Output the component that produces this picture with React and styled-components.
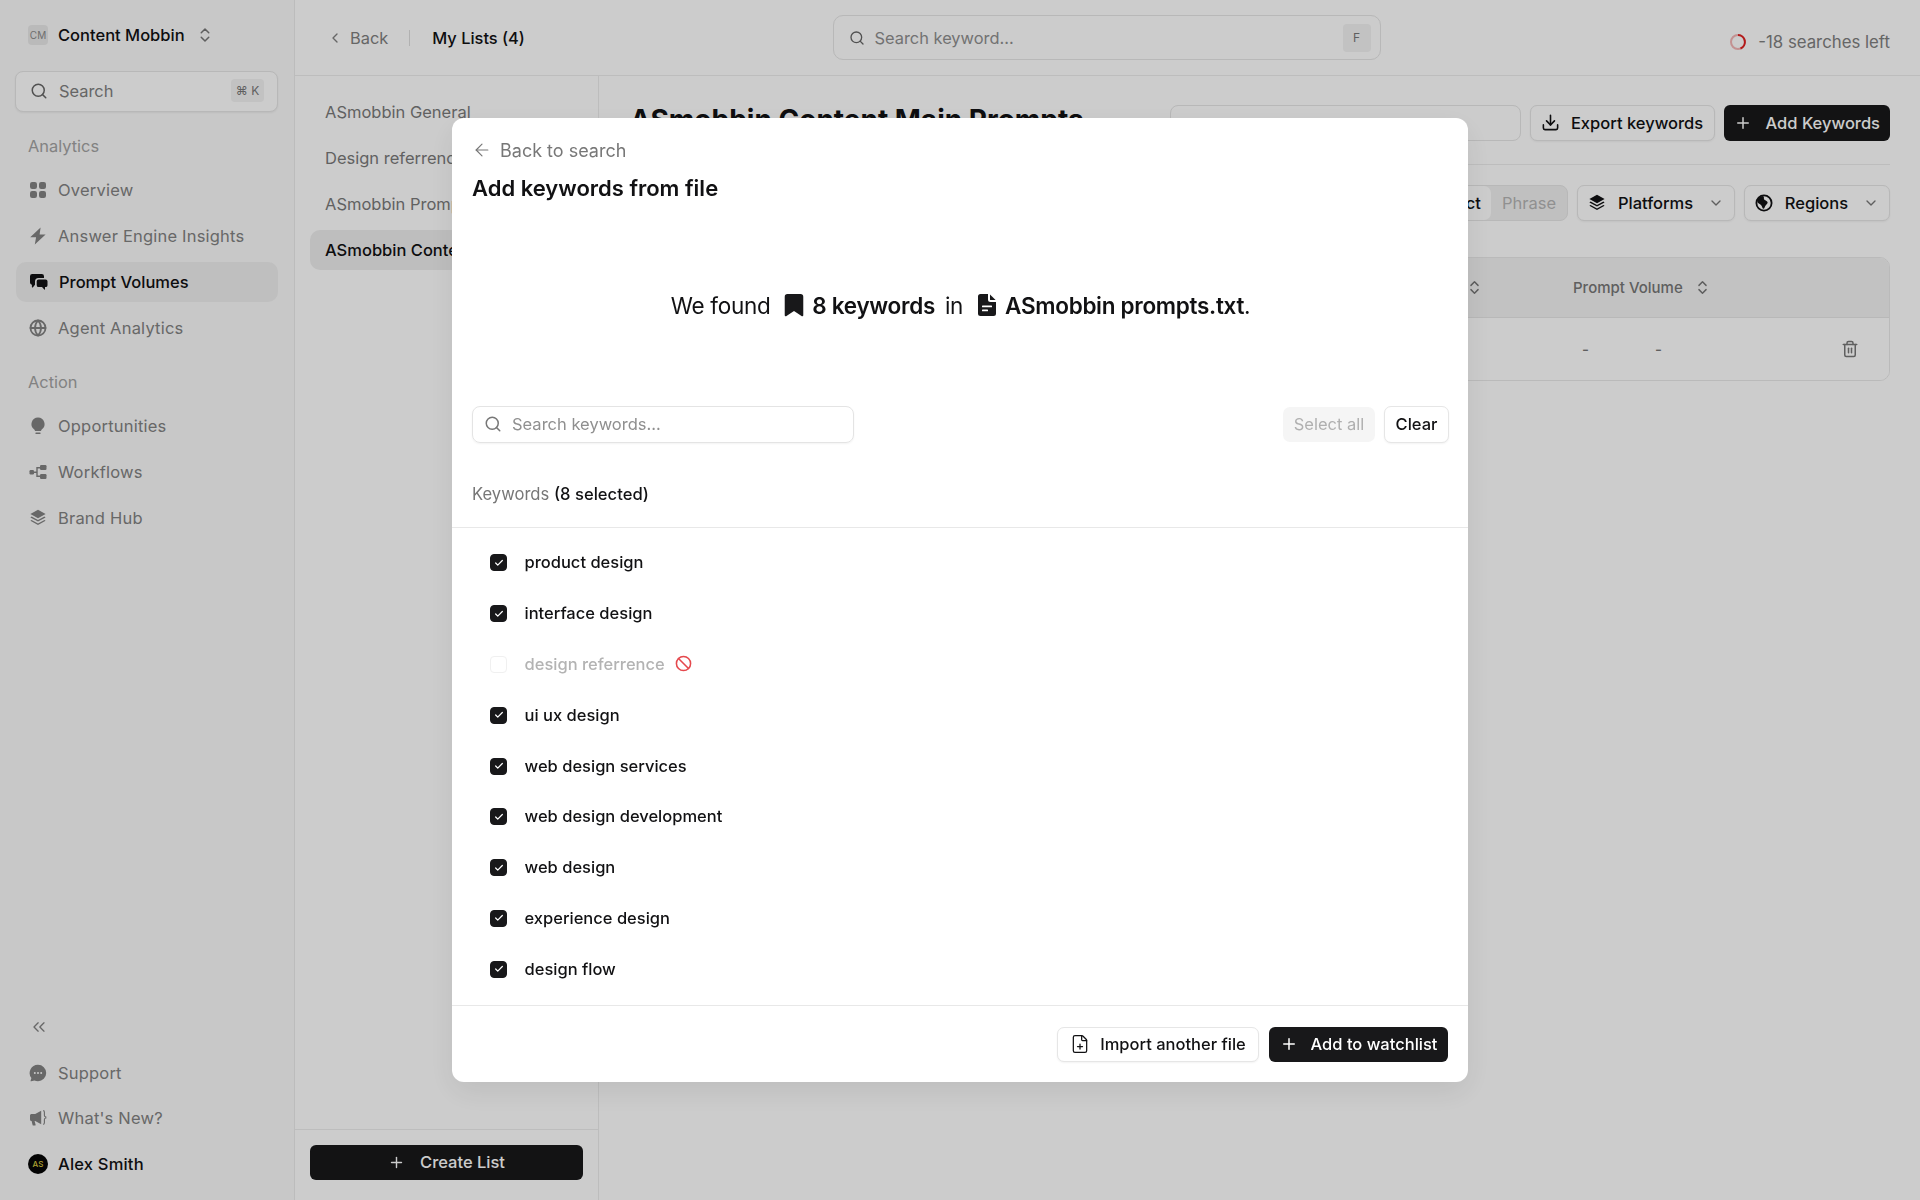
import React from 'react';
import styled, { createGlobalStyle } from 'styled-components';
import {
  ArrowLeft,
  Ban,
  Check,
  ChevronDown,
  ChevronLeft,
  ChevronsLeft,
  ChevronsUpDown,
  Download,
  FilePlus,
  Globe,
  Plus,
  Search,
  Trash2
} from 'lucide-react';

const GlobalStyle = createGlobalStyle`
  html, body {
    margin: 0;
    padding: 0;
    height: 100%;
    background: #fff;
  }

  body {
    font-family: Inter, "Liberation Sans", sans-serif;
    color: #111113;
  }

  * {
    box-sizing: border-box;
  }
`;

const Page = styled.div`
  display: flex;
  width: 100%;
  height: 100vh;
  overflow: hidden;
`;

const Sidebar = styled.aside`
  display: flex;
  flex-direction: column;
  flex: 0 0 295px;
  padding: 25px 16px 16px 15px;
  background: #fafafa;
  border-right: 1px solid #ececec;
`;

const Workspace = styled.div`
  display: flex;
  align-items: center;
  height: 20px;
  padding-left: 13px;
  font-size: 16.5px;
  font-weight: 450;
  color: #111113;

  svg {
    margin-left: 11px;
    color: #777;
  }
`;

const Avatar = styled.span`
  display: flex;
  align-items: center;
  justify-content: center;
  width: 20px;
  height: 20px;
  margin-right: 10px;
  border-radius: 4px;
  background: #e9e9e9;
  color: #8a8a8a;
  font-size: 10px;
  font-weight: 400;
`;

const SideSearch = styled.div`
  display: flex;
  align-items: center;
  gap: 11px;
  height: 41px;
  margin-top: 26px;
  padding: 0 13px 2px 14px;
  border: 1px solid #e6e6e6;
  border-radius: 8px;
  background: #fff;
  box-shadow: 0 1px 2px rgba(0, 0, 0, 0.06);
  color: #808080;
  font-size: 16.4px;

  svg {
    color: #666;
  }
`;

const Kbd = styled.span`
  display: flex;
  align-items: center;
  justify-content: center;
  height: ${props => props.tall ? '28px' : '23px'};
  min-width: ${props => props.tall ? '28px' : '33px'};
  margin-left: auto;
  border-radius: 4px;
  background: #f3f3f3;
  color: #777;
  font-size: 12px;
  font-weight: 400;
`;

const SectionLabel = styled.div`
  height: 24px;
  margin: 22px 0 12px 13px;
  color: #a3a3a3;
  font-size: 16.4px;
  line-height: 24px;
`;

const Nav = styled.nav`
  display: flex;
  flex-direction: column;
  gap: 6px;
`;

const NavItem = styled.div`
  display: flex;
  align-items: center;
  gap: 11px;
  height: 40px;
  margin-left: 1px;
  padding-left: 13px;
  border-radius: 10px;
  background: ${props => props.active ? '#efefef' : 'transparent'};
  color: ${props => props.active || props.dark ? '#111113' : '#828282'};
  font-size: 16.5px;
  font-weight: ${props => props.active || props.dark ? 450 : 400};
  letter-spacing: ${props => props.active ? '0' : '0.2px'};

  svg {
    flex: none;
  }
`;

const BottomNav = styled(Nav)`
  gap: 5.6px;
  margin-top: auto;
`;

const UserDot = styled.span`
  display: flex;
  align-items: center;
  justify-content: center;
  width: 20px;
  height: 20px;
  margin-right: -1px;
  margin-left: -1px;
  border-radius: 50%;
  background: #060606;
  color: #d8c93e;
  font-size: 8px;
`;

const Main = styled.div`
  display: flex;
  flex-direction: column;
  flex: 1;
  min-width: 0;
`;

const TopBar = styled.header`
  display: grid;
  grid-template-columns: 1fr 548px 1fr;
  align-items: center;
  flex: none;
  height: 76px;
  padding-right: 2px;
  border-bottom: 1px solid #ededed;
`;

const Crumbs = styled.div`
  display: flex;
  align-items: center;
  padding-left: 32px;
  font-size: 16.4px;
`;

const BackLink = styled.span`
  display: flex;
  align-items: center;
  gap: 7px;
  color: #808080;
`;

const CrumbSep = styled.span`
  width: 1px;
  height: 16px;
  margin: 0 22px 0 21px;
  background: #dedede;
`;

const CrumbTitle = styled.span`
  color: #111113;
  font-weight: 450;
`;

const TopSearch = styled.div`
  display: flex;
  align-items: center;
  gap: 10px;
  height: 45px;
  padding: 0 9px 0 15px;
  border: 1px solid #e6e6e6;
  border-radius: 10px;
  color: #8f8f8f;
  font-size: 16.4px;

  svg {
    color: #666;
  }
`;

const Quota = styled.div`
  display: flex;
  align-items: center;
  justify-content: flex-end;
  gap: 11px;
  padding: 8px 28px 0 0;
  color: #808080;
  font-size: 16.8px;
`;

const Body = styled.div`
  display: flex;
  flex: 1;
  min-height: 0;
`;

const ListPanel = styled.div`
  display: flex;
  flex-direction: column;
  flex: 0 0 304px;
  border-right: 1px solid #ededed;
`;

const Lists = styled.div`
  display: flex;
  flex-direction: column;
  flex: 1;
  gap: 6px;
  padding: 16px 15px;
`;

const ListItem = styled.div`
  display: flex;
  align-items: center;
  height: 40px;
  padding-left: 15px;
  border-radius: 10px;
  background: ${props => props.active ? '#eeeeee' : 'transparent'};
  color: ${props => props.active ? '#111113' : '#7a7a7a'};
  font-size: 16.5px;
  font-weight: ${props => props.active ? 450 : 400};
  white-space: nowrap;
`;

const ListFooter = styled.div`
  flex: none;
  padding: 15px 15px 20px;
  border-top: 1px solid #ededed;
`;

const DarkButton = styled.div`
  display: flex;
  align-items: center;
  justify-content: center;
  gap: ${props => props.wide ? '15px' : '10px'};
  height: 35px;
  padding: 0 10px 1px;
  border-radius: 6px;
  background: #18181a;
  color: #fff;
  font-size: 16.5px;
  font-weight: 450;
  white-space: nowrap;
`;

const Content = styled.section`
  flex: 1;
  min-width: 0;
  padding: 29px 30px 0 31px;
`;

const HeadRow = styled.div`
  display: flex;
  align-items: center;
  gap: 9px;
  height: 36px;
`;

const Title = styled.h1`
  flex: 1;
  margin: -7px 0 0;
  font-size: 28px;
  font-weight: 700;
  line-height: 30px;
  white-space: nowrap;
`;

const HeadSearch = styled.div`
  display: flex;
  align-items: center;
  flex: 0 0 351px;
  height: 36px;
  border: 1px solid #e6e6e6;
  border-radius: 8px;
`;

const OutlineButton = styled.div`
  display: flex;
  align-items: center;
  justify-content: center;
  gap: ${props => props.gap || 10}px;
  height: ${props => props.h || 36}px;
  width: ${props => props.w}px;
  padding-bottom: 1px;
  border: 1px solid #e6e6e6;
  border-radius: 7px;
  background: #fff;
  box-shadow: 0 1px 2px rgba(0, 0, 0, 0.05);
  color: #111113;
  font-size: 16.5px;
  font-weight: 450;
  white-space: nowrap;
`;

const AddKeywords = styled(DarkButton)`
  flex: 0 0 166px;
  height: 36px;
  gap: 14px;
`;

const HeadDivider = styled.div`
  height: 1px;
  margin: 23px 0 20px;
  background: #ededed;
`;

const FilterRow = styled.div`
  display: flex;
  justify-content: flex-end;
  gap: 9px;
  height: 36px;
`;

const Segments = styled.div`
  display: flex;
  border: 1px solid #e6e6e6;
  border-radius: 8px;
  background: #f1f1f1;
  font-size: 16.5px;
`;

const Segment = styled.div`
  display: flex;
  align-items: center;
  justify-content: center;
  width: ${props => props.w}px;
  border-radius: 7px;
  background: ${props => props.active ? '#fff' : 'transparent'};
  color: ${props => props.active ? '#111113' : '#b5b5b5'};
  font-weight: ${props => props.active ? 450 : 400};
`;

const ChevronMuted = styled(ChevronDown)`
  margin-left: 3px;
  color: #777;
`;

const Table = styled.div`
  margin-top: 36px;
  border: 1px solid #e9e9e9;
  border-radius: 10px;
  overflow: hidden;
`;

const TableRow = styled.div`
  display: grid;
  grid-template-columns: 1fr 226px 316px;
  align-items: center;
  height: ${props => props.head ? '60px' : '62px'};
  background: ${props => props.head ? '#f3f3f3' : '#fff'};
  border-bottom: ${props => props.head ? '1px solid #e6e6e6' : '0'};
  color: #777;
  font-size: 15px;
  font-weight: 450;
`;

const HeadCell = styled.div`
  display: flex;
  align-items: center;
  gap: 11px;
  padding-left: ${props => props.pad || 0}px;
`;

const DataCell = styled.div`
  display: flex;
  align-items: center;
  padding: 0 30px 0 9px;

  span + span {
    margin-left: 66px;
  }

  svg {
    margin-left: auto;
    color: #777;
  }
`;

const Overlay = styled.div`
  position: fixed;
  inset: 0;
  display: flex;
  align-items: center;
  justify-content: center;
  background: rgba(0, 0, 0, 0.2);
`;

const Modal = styled.div`
  display: flex;
  flex-direction: column;
  width: 1016px;
  height: 964px;
  border-radius: 12px;
  background: #fff;
  box-shadow: 0 10px 30px rgba(0, 0, 0, 0.08);
  overflow: hidden;
`;

const ModalHead = styled.div`
  flex: none;
  padding: 22px 19px 0 20px;
`;

const BackRow = styled.div`
  display: flex;
  align-items: center;
  gap: 8px;
  height: 20px;
  color: #777;
  font-size: 18px;
`;

const ModalTitle = styled.h2`
  margin: 14px 0 0;
  font-size: 22px;
  font-weight: 600;
  line-height: 28px;
`;

const Found = styled.div`
  display: flex;
  align-items: center;
  justify-content: center;
  gap: 10px;
  height: 30px;
  margin-top: 88px;
  font-size: 22.5px;
  letter-spacing: -0.3px;

  strong {
    font-weight: 600;
  }
`;

const FoundPart = styled.span`
  display: flex;
  align-items: center;
  gap: 8px;
  margin-left: 4px;
`;

const SearchRow = styled.div`
  display: flex;
  align-items: center;
  justify-content: space-between;
  margin-top: 86px;
`;

const KeywordSearch = styled.div`
  display: flex;
  align-items: center;
  gap: 10px;
  width: 382px;
  height: 37px;
  padding: 0 0 1px 11px;
  border: 1px solid #e4e4e4;
  border-radius: 8px;
  box-shadow: 0 1px 2px rgba(0, 0, 0, 0.05);
  color: #8f8f8f;
  font-size: 16.5px;

  svg {
    color: #777;
  }
`;

const RowActions = styled.div`
  display: flex;
  align-items: center;
  gap: 9px;
`;

const DisabledButton = styled.div`
  display: flex;
  align-items: center;
  justify-content: center;
  width: 92px;
  height: 35px;
  padding-bottom: 1px;
  border-radius: 7px;
  background: #f5f5f5;
  color: #b0b0b0;
  font-size: 16.5px;
`;

const CountLabel = styled.div`
  height: 20px;
  margin: 41px 0 23px;
  color: #777;
  font-size: 16.6px;
  line-height: 20px;

  b {
    color: #111113;
    font-weight: 500;
  }
`;

const KeywordList = styled.div`
  flex: 1;
  min-height: 0;
  padding-top: 9px;
  border-top: 1px solid #e8e8e8;
  overflow: hidden;
`;

const KeywordRow = styled.div`
  display: flex;
  align-items: center;
  gap: 17.5px;
  height: 50.8px;
  padding-left: 38px;
  color: ${props => props.disabled ? '#b3b3b3' : '#111113'};
  font-size: 16.5px;
  font-weight: 450;

  > svg {
    margin-left: -7px;
    color: #e5484d;
  }
`;

const Checkbox = styled.span`
  display: flex;
  align-items: center;
  justify-content: center;
  flex: none;
  width: 17px;
  height: 17px;
  margin-top: 1px;
  border: 1px solid ${props => props.off ? '#f0f0f0' : '#18181a'};
  border-radius: 4px;
  background: ${props => props.off ? '#fff' : '#18181a'};
  color: #fff;
`;

const ModalFooter = styled.div`
  display: flex;
  justify-content: flex-end;
  gap: 10px;
  flex: none;
  height: 77px;
  padding: 21px 20px 0 0;
  border-top: 1px solid #e8e8e8;
`;

const WatchButton = styled(DarkButton)`
  width: 179px;
  gap: 13px;
`;

const Tile = ({ size = 18 }) => (
  <svg width={size} height={size} viewBox="0 0 18 18" fill="currentColor">
    <rect x="1" y="1" width="7" height="7" rx="2.2" />
    <rect x="10" y="1" width="7" height="7" rx="2.2" />
    <rect x="1" y="10" width="7" height="7" rx="2.2" />
    <rect x="10" y="10" width="7" height="7" rx="2.2" />
  </svg>
);

const Bolt = () => (
  <svg width="18" height="18" viewBox="0 0 18 18" fill="currentColor">
    <path d="M11.6.6 1.2 10.3h5.9L5.8 17.6 16.6 7.4h-6z" />
  </svg>
);

const Chats = () => (
  <svg width="19" height="18" viewBox="0 0 19 18" fill="currentColor">
    <path d="M3.2 1h9.6A2.2 2.2 0 0 1 15 3.2V5H9.5a3.5 3.5 0 0 0-3.5 3.5v3.3l-2.2 2.6a.5.5 0 0 1-.9-.3v-2.4A2.2 2.2 0 0 1 1 9.6V3.2A2.2 2.2 0 0 1 3.2 1z" />
    <path d="M9.6 6.4h7A1.9 1.9 0 0 1 18.5 8.3v3.9a1.9 1.9 0 0 1-1.9 1.9h-.6v2.2a.4.4 0 0 1-.7.3L13 14.1H9.6a1.9 1.9 0 0 1-1.9-1.9V8.3a1.9 1.9 0 0 1 1.9-1.9z" />
  </svg>
);

const Bulb = () => (
  <svg width="18" height="18" viewBox="0 0 18 18" fill="currentColor">
    <path d="M9 .5a6.6 6.6 0 0 0-4 11.8c.6.5.9 1 1 1.7h6c.1-.7.4-1.2 1-1.7A6.6 6.6 0 0 0 9 .5z" />
    <rect x="6.3" y="15.4" width="5.4" height="1.6" rx=".8" />
  </svg>
);

const Flow = () => (
  <svg width="18" height="18" viewBox="0 0 18 18" fill="currentColor">
    <rect x="0.5" y="7" width="4.5" height="4.5" rx="1.2" />
    <rect x="11" y="2" width="6.5" height="5" rx="1.2" />
    <rect x="11" y="11" width="6.5" height="5" rx="1.2" />
    <path d="M5 8.6h2.3V4h3.7v1.4H8.7v7.2H11V14H7.3V9.9H5z" />
  </svg>
);

const Layers = ({ size = 18 }) => (
  <svg width={size} height={size} viewBox="0 0 18 18" fill="currentColor">
    <path d="M9 .8 16.6 5 9 9.2 1.4 5z" />
    <path d="M2.6 7.6 9 11.1l6.4-3.5 1.2.8L9 12.6 1.4 8.4z" />
    <path d="M2.6 11 9 14.5l6.4-3.5 1.2.8L9 16 1.4 11.8z" />
  </svg>
);

const ChatDots = () => (
  <svg width="18" height="18" viewBox="0 0 18 18">
    <path fill="currentColor" d="M9 .8a8.2 8.2 0 0 1 0 16.4c-1.3 0-2.5-.3-3.6-.8l-3.2.9a.5.5 0 0 1-.6-.6l.8-2.7A8.2 8.2 0 0 1 9 .8z" />
    <circle cx="5.8" cy="9" r="1" fill="#fafafa" />
    <circle cx="9" cy="9" r="1" fill="#fafafa" />
    <circle cx="12.2" cy="9" r="1" fill="#fafafa" />
  </svg>
);

const Megaphone = () => (
  <svg width="18" height="18" viewBox="0 0 18 18" fill="currentColor">
    <path d="M1 6.6c0-.9.7-1.6 1.6-1.6h3.6l6-3.2v13.4l-6-3.2H5.6l1 3.8a.6.6 0 0 1-.6.8H4.4a.8.8 0 0 1-.8-.6L2.6 12A1.6 1.6 0 0 1 1 10.4z" />
    <path d="M14.2 1.6c1 0 1.2.8 1.2 1.6v3.4c0 .8.4 1.2 1.4 1.4v1c-1 .2-1.4.6-1.4 1.4v3.4c0 .8-.2 1.6-1.2 1.6" fill="none" stroke="currentColor" strokeWidth="1.1" />
  </svg>
);

const RegionGlobe = () => (
  <svg width="18" height="18" viewBox="0 0 18 18">
    <circle cx="9" cy="9" r="7.6" fill="none" stroke="currentColor" strokeWidth="1.8" />
    <path fill="currentColor" d="M8 2c-3 .3-5.5 2.5-5.6 5.4 0 1.8 2.6 2.4 3.8 3.8 1 1.2 1.2 3.6 2.4 3.6 1 0 1.2-2.6 2.4-3.800 1-1 2-1.800 1.500-3C12 6.400 9.600 6.600 9 5.200 8.700 4.300 9.500 2.600 8 2z" />
  </svg>
);

const BookmarkFilled = () => (
  <svg width="20" height="24" viewBox="0 0 18 22" fill="#18181a">
    <path d="M3 1h12a2.5 2.5 0 0 1 2.5 2.5v16.800c0 .8-.9 1.300-1.600.8L9 16.500l-6.900 4.600c-.7.500-1.600 0-1.600-.8V3.500A2.500 2.500 0 0 1 3 1z" />
  </svg>
);

const FileFilled = () => (
  <svg width="20" height="24" viewBox="0 0 20 24">
    <path fill="#18181a" d="M3.5 1H11v5.500A2.500 2.500 0 0 0 13.500 9H19v11.500a2.500 2.500 0 0 1-2.500 2.500h-13A2.500 2.500 0 0 1 1 20.500v-17A2.500 2.500 0 0 1 3.500 1z" />
    <path fill="#18181a" d="M13 1.400 18.600 7h-5a.6.6 0 0 1-.6-.6z" />
    <rect x="5" y="12.500" width="10" height="1.800" rx=".6" fill="#fff" />
    <rect x="5" y="16.500" width="6" height="1.800" rx=".6" fill="#fff" />
  </svg>
);

const Ring = () => (
  <svg width="18" height="18" viewBox="0 0 18 18" fill="none">
    <circle cx="9" cy="9" r="7" stroke="#f4b6b6" strokeWidth="2" />
    <path d="M9 2a7 7 0 0 1 2.5 13.500" stroke="#e02020" strokeWidth="2" />
  </svg>
);

const topNav = [
  { label: 'Overview', icon: <Tile /> },
  { label: 'Answer Engine Insights', icon: <Bolt /> },
  { label: 'Prompt Volumes', icon: <Chats />, active: true },
  { label: 'Agent Analytics', icon: <Globe size={18} strokeWidth={2.4} /> }
];

const actionNav = [
  { label: 'Opportunities', icon: <Bulb /> },
  { label: 'Workflows', icon: <Flow /> },
  { label: 'Brand Hub', icon: <Layers /> }
];

const lists = ['ASmobbin General', 'Design referrence', 'ASmobbin Prompts', 'ASmobbin Content'];

const keywords = [
  { name: 'product design' },
  { name: 'interface design' },
  { name: 'design referrence', blocked: true },
  { name: 'ui ux design' },
  { name: 'web design services' },
  { name: 'web design development' },
  { name: 'web design' },
  { name: 'experience design' },
  { name: 'design flow' }
];

const App = () => {
  return (
    <>
      <GlobalStyle />
      <Page>
        <Sidebar>
          <Workspace>
            <Avatar>CM</Avatar>
            Content Mobbin
            <ChevronsUpDown size={18} />
          </Workspace>
          <SideSearch>
            <Search size={18} />
            Search
            <Kbd>⌘ K</Kbd>
          </SideSearch>
          <SectionLabel>Analytics</SectionLabel>
          <Nav>
            {topNav.map(item => (
              <NavItem key={item.label} active={item.active}>
                {item.icon}
                {item.label}
              </NavItem>
            ))}
          </Nav>
          <SectionLabel>Action</SectionLabel>
          <Nav>
            {actionNav.map(item => (
              <NavItem key={item.label}>
                {item.icon}
                {item.label}
              </NavItem>
            ))}
          </Nav>
          <BottomNav>
            <NavItem>
              <ChevronsLeft size={20} strokeWidth={1.6} />
            </NavItem>
            <NavItem>
              <ChatDots />
              Support
            </NavItem>
            <NavItem>
              <Megaphone />
              What's New?
            </NavItem>
            <NavItem dark>
              <UserDot>AS</UserDot>
              Alex Smith
            </NavItem>
          </BottomNav>
        </Sidebar>
        <Main>
          <TopBar>
            <Crumbs>
              <BackLink>
                <ChevronLeft size={16} />
                Back
              </BackLink>
              <CrumbSep />
              <CrumbTitle>My Lists (4)</CrumbTitle>
            </Crumbs>
            <TopSearch>
              <Search size={16} />
              Search keyword...
              <Kbd tall>F</Kbd>
            </TopSearch>
            <Quota>
              <Ring />
              -18 searches left
            </Quota>
          </TopBar>
          <Body>
            <ListPanel>
              <Lists>
                {lists.map((name, index) => (
                  <ListItem key={name} active={index === 3}>{name}</ListItem>
                ))}
              </Lists>
              <ListFooter>
                <DarkButton wide>
                  <Plus size={17} />
                  Create List
                </DarkButton>
              </ListFooter>
            </ListPanel>
            <Content>
              <HeadRow>
                <Title>ASmobbin Content Main Prompts</Title>
                <HeadSearch />
                <OutlineButton w={185} gap={11}>
                  <Download size={19} />
                  Export keywords
                </OutlineButton>
                <AddKeywords>
                  <Plus size={18} />
                  Add Keywords
                </AddKeywords>
              </HeadRow>
              <HeadDivider />
              <FilterRow>
                <Segments>
                  <Segment active w={64}>Exact</Segment>
                  <Segment w={76}>Phrase</Segment>
                </Segments>
                <OutlineButton w={158} gap={12}>
                  <Layers />
                  Platforms
                  <ChevronMuted size={16} />
                </OutlineButton>
                <OutlineButton w={146} gap={12}>
                  <RegionGlobe />
                  Regions
                  <ChevronMuted size={16} />
                </OutlineButton>
              </FilterRow>
              <Table>
                <TableRow head>
                  <HeadCell pad={20}>Keyword</HeadCell>
                  <HeadCell>
                    Search Volume
                    <ChevronsUpDown size={17} />
                  </HeadCell>
                  <HeadCell>
                    Prompt Volume
                    <ChevronsUpDown size={17} />
                  </HeadCell>
                </TableRow>
                <TableRow>
                  <HeadCell pad={20}>ui ux design</HeadCell>
                  <HeadCell>-</HeadCell>
                  <DataCell>
                    <span>-</span>
                    <span>-</span>
                    <Trash2 size={18} />
                  </DataCell>
                </TableRow>
              </Table>
            </Content>
          </Body>
        </Main>
      </Page>
      <Overlay>
        <Modal>
          <ModalHead>
            <BackRow>
              <ArrowLeft size={20} strokeWidth={1.4} />
              Back to search
            </BackRow>
            <ModalTitle>Add keywords from file</ModalTitle>
            <Found>
              We found
              <FoundPart>
                <BookmarkFilled />
                <strong>8 keywords</strong>
              </FoundPart>
              in
              <FoundPart>
                <FileFilled />
                <span><strong>ASmobbin prompts.txt</strong>.</span>
              </FoundPart>
            </Found>
            <SearchRow>
              <KeywordSearch>
                <Search size={18} />
                Search keywords...
              </KeywordSearch>
              <RowActions>
                <DisabledButton>Select all</DisabledButton>
                <OutlineButton w={65} h={37}>Clear</OutlineButton>
              </RowActions>
            </SearchRow>
            <CountLabel>
              Keywords <b>(8 selected)</b>
            </CountLabel>
          </ModalHead>
          <KeywordList>
            {keywords.map(item => (
              <KeywordRow key={item.name} disabled={item.blocked}>
                <Checkbox off={item.blocked}>
                  {!item.blocked && <Check size={10} strokeWidth={3} />}
                </Checkbox>
                {item.name}
                {item.blocked && <Ban size={17} strokeWidth={2.2} />}
              </KeywordRow>
            ))}
          </KeywordList>
          <ModalFooter>
            <OutlineButton w={202} h={35} gap={10}>
              <FilePlus size={20} strokeWidth={1.5} />
              Import another file
            </OutlineButton>
            <WatchButton>
              <Plus size={18} />
              Add to watchlist
            </WatchButton>
          </ModalFooter>
        </Modal>
      </Overlay>
    </>
  );
};

export default App;
